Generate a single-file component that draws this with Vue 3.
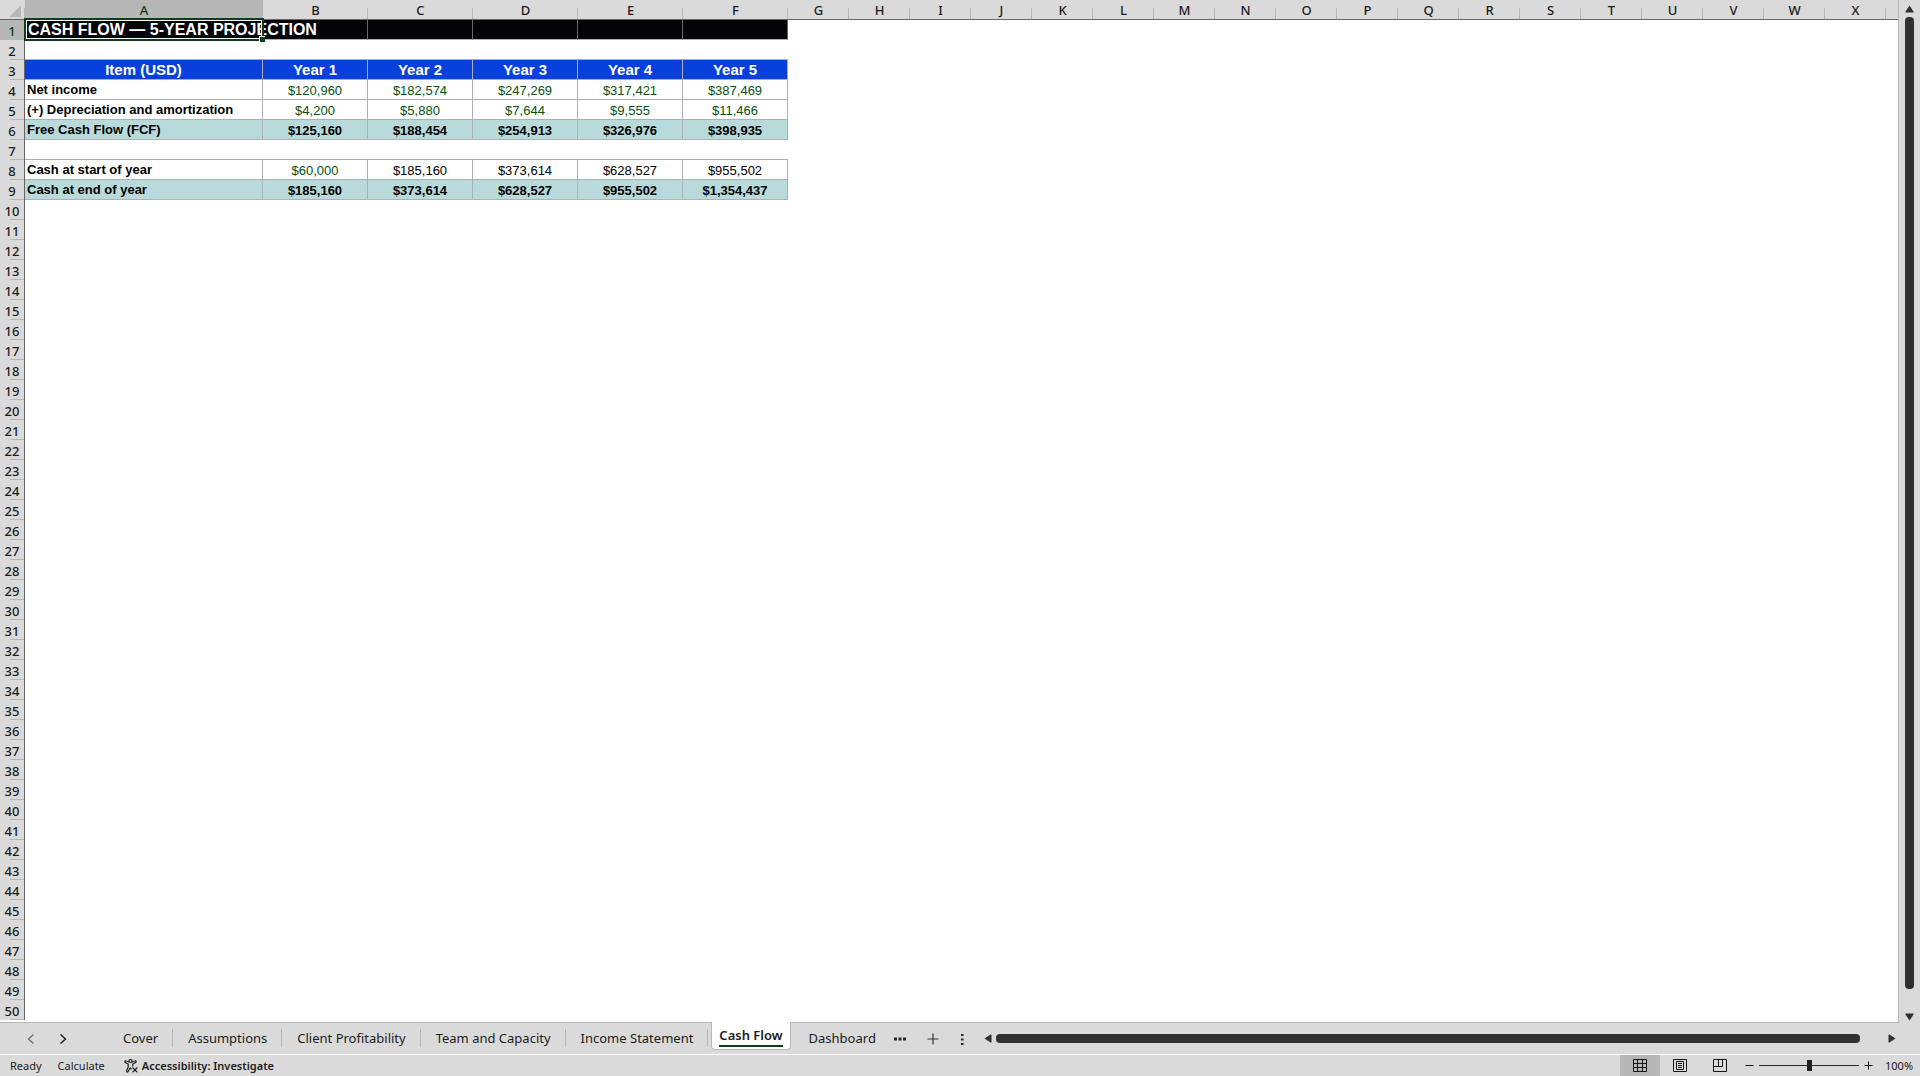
<template>
  <div class="workbook">
    <!-- Sheet -->
    <main class="sheet-area">
      <div class="grid-pane">
        <table class="grid">
          <colgroup>
            <col class="col-index" />
            <col class="col-item" />
            <col v-for="n in 5" :key="'y' + n" class="col-year" />
            <col v-for="n in 18" :key="'e' + n" class="col-empty" />
            <col />
          </colgroup>
          <thead>
            <tr>
              <th class="corner">
                <svg width="12" height="12" viewBox="0 0 12 12"><path d="M12 0V12H0Z" fill="#b7b7b7" /></svg>
              </th>
              <th v-for="letter in letters" :key="letter" :class="{ active: letter === 'A' }">{{ letter }}</th>
              <th></th>
            </tr>
          </thead>
          <tbody>
            <tr v-for="row in 50" :key="row" :class="rows[row]?.type">
              <th :class="{ active: row === 1 }">{{ row }}</th>
              <td
                v-for="(cell, i) in rows[row]?.cells ?? []"
                :key="i"
                :class="{ label: i === 0, linked: isLinked(row, i) }"
              >
                {{ cell }}
                <span v-if="row === 1 && i === 0" class="selection"><i class="fill-handle"></i></span>
              </td>
              <td v-if="!rows[row]" colspan="25"></td>
            </tr>
          </tbody>
        </table>
      </div>
      <div class="scroll vertical">
        <button aria-label="Scroll up">
          <svg width="9" height="8" viewBox="0 0 9 8"><path d="M4.500 0.500L8.500 6.500Q8.800 7.500 8 7.500H1Q0.200 7.500 0.500 6.500Z" /></svg>
        </button>
        <div class="thumb"></div>
        <button aria-label="Scroll down">
          <svg width="9" height="8" viewBox="0 0 9 8"><path d="M4.500 7.500L8.500 1.500Q8.800 0.500 8 0.500H1Q0.200 0.500 0.500 1.500Z" /></svg>
        </button>
      </div>
    </main>

    <!-- Sheet tabs -->
    <nav class="tab-bar">
      <div class="tab-arrows">
        <button aria-label="Previous sheet" class="dim">
          <svg width="8" height="10" viewBox="0 0 8 10"><path d="M6.500 0.500L1.500 5L6.500 9.500" /></svg>
        </button>
        <button aria-label="Next sheet">
          <svg width="8" height="10" viewBox="0 0 8 10"><path d="M1.500 0.500L6.500 5L1.500 9.500" /></svg>
        </button>
      </div>
      <div class="tabs">
        <button
          v-for="tab in tabs"
          :key="tab"
          :class="['tab', { current: tab === currentTab }]"
          @click="currentTab = tab"
        >
          <span>{{ tab }}</span>
        </button>
      </div>
      <div class="tab-tools">
        <button aria-label="More sheets">
          <svg width="12" height="12" viewBox="0 0 12 12" fill="#262626"><path d="M0 4.500h3v3H0zM4.500 4.500h3v3h-3zM9 4.500h3v3H9z" /></svg>
        </button>
        <button aria-label="New sheet">
          <svg width="12" height="12" viewBox="0 0 12 12"><path d="M6 0.500V11.500M0.500 6H11.500" stroke="#333" stroke-width="1.200" /></svg>
        </button>
        <button aria-label="Resize tab bar">
          <svg width="4" height="12" viewBox="0 0 4 12" fill="#262626"><path d="M1 1h2.500v2H1zM1 5.500h2.500v2H1zM1 10h2.500v2H1z" /></svg>
        </button>
      </div>
      <div class="scroll horizontal">
        <button aria-label="Scroll left">
          <svg width="8" height="9" viewBox="0 0 8 9"><path d="M0.500 4.500L6.500 0.500Q7.500 0.200 7.500 1V8Q7.500 8.800 6.500 8.500Z" /></svg>
        </button>
        <div class="thumb"></div>
        <button aria-label="Scroll right">
          <svg width="8" height="9" viewBox="0 0 8 9"><path d="M7.500 4.500L1.500 0.500Q0.500 0.200 0.500 1V8Q0.500 8.800 1.500 8.500Z" /></svg>
        </button>
      </div>
    </nav>

    <!-- Status bar -->
    <footer class="status-bar">
      <span>Ready</span>
      <span>Calculate</span>
      <button class="accessibility">
        <svg width="14" height="14" viewBox="0 0 14 14" fill="none" stroke="#1c1c1c" stroke-width="1.200">
          <circle cx="6.500" cy="2" r="1.500" />
          <path d="M5 3L1.500 1.800Q0.300 2.500 1.300 3.500L4.200 5V8L2.500 12Q2.800 13.700 4 12.700L6.300 9L7.500 10.200" />
          <path d="M8 3L11.500 1.800Q12.700 2.500 11.700 3.500L8.800 5V7.500" />
          <path d="M8.500 8.500L13.300 13.300M13.300 8.500L8.500 13.300" />
        </svg>
        Accessibility: Investigate
      </button>
      <div class="views">
        <button class="view selected" aria-label="Normal">
          <svg width="14" height="14" viewBox="0 0 14 14"><path d="M0.500 0.500H13.500V12.500H0.500ZM4.500 0.500V12.500M9.500 0.500V12.500M0.500 4.500H13.500M0.500 8.500H13.500" /></svg>
        </button>
        <button class="view" aria-label="Page layout">
          <svg width="14" height="14" viewBox="0 0 14 14"><path d="M0.500 0.500H13.500V12.500H0.500ZM3.500 2.500H10.500V10.500H3.500ZM5 4.500H9M5 6.500H9M5 8.500H9" /></svg>
        </button>
        <button class="view" aria-label="Page break preview">
          <svg width="14" height="14" viewBox="0 0 14 14"><path d="M0.500 0.500H13.500V12.500H0.500ZM0.500 7.500H9.500V0.500M5.500 0.500V7.500" /></svg>
        </button>
      </div>
      <div class="zoom">
        <button aria-label="Zoom out" @click="zoom -= 10">
          <svg width="9" height="9" viewBox="0 0 9 9"><path d="M0.500 4.500H8.500" /></svg>
        </button>
        <input v-model.number="zoom" type="range" min="0" max="200" aria-label="Zoom" />
        <button aria-label="Zoom in" @click="zoom += 10">
          <svg width="9" height="9" viewBox="0 0 9 9"><path d="M0.500 4.500H8.500M4.500 0.500V8.500" /></svg>
        </button>
        <span class="percent">{{ zoom }}%</span>
      </div>
    </footer>
  </div>
</template>

<script setup>
import { ref } from 'vue';

const letters = 'ABCDEFGHIJKLMNOPQRSTUVWX'.split('');

const tabs = [
  'Cover',
  'Assumptions',
  'Client Profitability',
  'Team and Capacity',
  'Income Statement',
  'Cash Flow',
  'Dashboard'
];

const currentTab = ref('Cash Flow');
const zoom = ref(100);

const rows = {
  1: { type: 'title', cells: ['CASH FLOW — 5-YEAR PROJECTION', '', '', '', '', ''] },
  2: { type: 'spacer', cells: ['', '', '', '', '', ''] },
  3: { type: 'heading', cells: ['Item (USD)', 'Year 1', 'Year 2', 'Year 3', 'Year 4', 'Year 5'] },
  4: { type: 'data', cells: ['Net income', '$120,960', '$182,574', '$247,269', '$317,421', '$387,469'] },
  5: { type: 'data', cells: ['(+) Depreciation and amortization', '$4,200', '$5,880', '$7,644', '$9,555', '$11,466'] },
  6: { type: 'total', cells: ['Free Cash Flow (FCF)', '$125,160', '$188,454', '$254,913', '$326,976', '$398,935'] },
  7: { type: 'spacer', cells: ['', '', '', '', '', ''] },
  8: { type: 'data', cells: ['Cash at start of year', '$60,000', '$185,160', '$373,614', '$628,527', '$955,502'] },
  9: { type: 'total', cells: ['Cash at end of year', '$185,160', '$373,614', '$628,527', '$955,502', '$1,354,437'] }
};

// Values pulled from other sheets are shown in green
const isLinked = (row, col) => {
  if (row === 4 || row === 5) return col > 0;
  return row === 8 && col === 1;
};
</script>

<style>
body {
  margin: 0;
  background: #dadada;
}
</style>

<style scoped>
.workbook {
  display: flex;
  flex-direction: column;
  height: 100vh;
  background: #dadada;
  color: #1c1c1c;
  font-family: "Noto Sans", "Open Sans", sans-serif;
  font-size: 11px;
}

button {
  display: flex;
  align-items: center;
  justify-content: center;
  padding: 0;
  border: none;
  background: none;
  color: inherit;
  font: inherit;
}

svg {
  display: block;
  flex: none;
}

.sheet-area {
  flex: 1;
  min-height: 0;
  display: flex;
}

.grid-pane {
  flex: 1;
  min-width: 0;
  overflow: hidden;
  background: #fff;
  border-right: 1px solid #b7b7b7;
  border-bottom: 1px solid #b7b7b7;
}

/* Grid */
.grid {
  width: 100%;
  table-layout: fixed;
  border-collapse: separate;
  border-spacing: 0;
}

.col-index {
  width: 25px;
}

.col-item {
  width: 238px;
}

.col-year {
  width: 105px;
}

.col-empty {
  width: 61px;
}

.grid tr {
  height: 20px;
}

.grid th,
.grid td {
  box-sizing: border-box;
  height: 20px;
  padding: 2px 0 0;
  line-height: 17px;
  white-space: nowrap;
}

.grid th {
  font-size: 13px;
  font-weight: 500;
}

thead th {
  border-bottom: 1px solid #666;
  background: linear-gradient(#b7b7b7, #b7b7b7) right bottom / 1px 11px no-repeat #dadada;
}

thead th:last-child {
  background: #dadada;
}

thead .active {
  background: #b7b7b7;
  color: #0f3d1c;
}

.corner svg {
  margin-left: 9px;
}

tbody th {
  border-right: 1px solid #666;
  background: linear-gradient(#b7b7b7, #b7b7b7) right bottom / 14px 1px no-repeat #dadada;
}

tbody th.active {
  background: #b7b7b7;
  color: #0f3d1c;
}

.grid td {
  font-family: "Liberation Sans", Arial, sans-serif;
  font-size: 13px;
  text-align: center;
  color: #000;
}

.title td,
.heading td,
.data td,
.total td {
  border-right: 1px solid #adb1b5;
  border-bottom: 1px solid #adb1b5;
}

.spacer td {
  border-bottom: 1px solid #adb1b5;
}

.grid .label {
  padding: 0 0 0 2px;
  line-height: 19px;
  text-align: left;
  font-weight: bold;
}

.title td {
  background: #030308;
  border-right-color: #666;
}

.grid .title .label {
  position: relative;
  padding-left: 3px;
  line-height: 17px;
  color: #fff;
  font-size: 16px;
}

.grid .heading td {
  padding: 0;
  line-height: 19px;
  background: #093fdc;
  color: #fff;
  font-size: 15px;
  font-weight: bold;
  text-align: center;
}

.total td {
  background: #b8dada;
  font-weight: bold;
}

.grid .linked {
  color: #08520f;
}

.selection {
  position: absolute;
  inset: -2px -2px -2px -1px;
  border: 2px solid #0f3d1c;
  box-shadow: inset 0 0 0 1px #fff;
}

.fill-handle {
  position: absolute;
  right: -3px;
  bottom: -3px;
  width: 5px;
  height: 5px;
  background: #0f3d1c;
  border: 1px solid #fff;
  border-right: none;
  border-bottom: none;
}

/* Scroll bars */
.scroll {
  display: flex;
  align-items: center;
}

.scroll svg {
  fill: #2f2f2f;
}

.scroll .thumb {
  flex: 1;
  border-radius: 4px;
  background: #2f2f2f;
}

.vertical {
  flex-direction: column;
  width: 9px;
  padding: 5px 6px 2px;
}

.vertical .thumb {
  width: 9px;
  margin: 4px 0 24px;
}

/* Sheet tabs */
.tab-bar {
  display: flex;
  height: 31px;
  border-bottom: 1px solid #fff;
}

.tab-arrows {
  display: flex;
  align-items: center;
  gap: 24px;
  width: 81px;
  padding-left: 27px;
}

.tab-arrows path {
  fill: none;
  stroke: #262626;
  stroke-width: 1.5;
}

.tab-arrows .dim path {
  stroke: #777;
}

.tabs {
  display: flex;
}

.tab {
  height: 30px;
  padding: 0 15px;
  font-size: 13px;
  line-height: 20px;
  background: linear-gradient(#b7b7b7, #b7b7b7) right center / 1px 18px no-repeat;
}

.tab:last-child {
  background: none;
}

.tab.current {
  height: 28px;
  margin: -1px 3px 0;
  padding: 0 7px;
  border: 1px solid #b7b7b7;
  border-top: none;
  border-radius: 0 0 4px 4px;
  background: #fff;
  font-weight: 600;
}

.tab.current span {
  border-bottom: 2px solid #0f3d1c;
}

.tab-tools {
  display: flex;
  align-items: center;
  gap: 21px;
  margin-left: 3px;
}

.horizontal {
  flex: 1;
  padding: 0 24px 0 20px;
}

.horizontal .thumb {
  height: 9px;
  margin: 0 28px 0 4px;
}

/* Status bar */
.status-bar {
  display: flex;
  align-items: center;
  height: 21px;
  padding: 0 7px 0 10px;
  line-height: 20px;
  white-space: nowrap;
}

.status-bar > span {
  margin-right: 16px;
}

.accessibility {
  gap: 4px;
  margin-left: 3px;
  font-weight: 600;
}

.views {
  display: flex;
  margin-left: auto;
}

.view {
  width: 40px;
  height: 21px;
}

.view.selected {
  background: #b7b7b7;
}

.views path,
.zoom path {
  fill: none;
  stroke: #161616;
}

.zoom {
  display: flex;
  align-items: center;
  margin-left: 5px;
}

.zoom input {
  appearance: none;
  width: 100px;
  height: 12px;
  margin: 0 5px;
  background: linear-gradient(#2a2a2a, #2a2a2a) center / 100% 1px no-repeat;
}

.zoom input::-webkit-slider-thumb {
  appearance: none;
  width: 5px;
  height: 11px;
  background: #222;
}

.percent {
  width: 28px;
  margin-left: 12px;
}
</style>
